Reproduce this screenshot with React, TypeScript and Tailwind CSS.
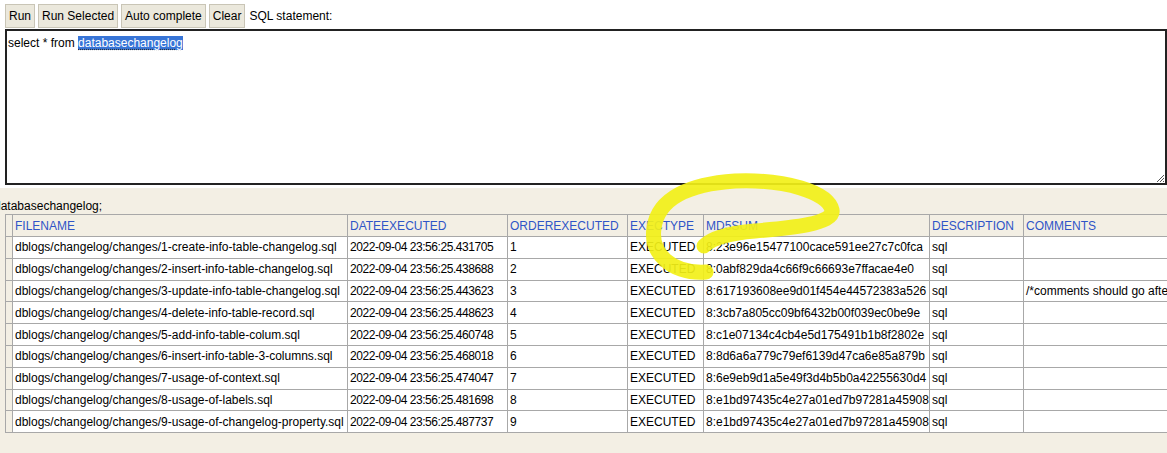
import React from "react";

const ROWS = [
  ["dblogs/changelog/changes/1-create-info-table-changelog.sql", "2022-09-04 23:56:25.431705", "1", "EXECUTED", "8:23e96e15477100cace591ee27c7c0fca", "sql", ""],
  ["dblogs/changelog/changes/2-insert-info-table-changelog.sql", "2022-09-04 23:56:25.438688", "2", "EXECUTED", "8:0abf829da4c66f9c66693e7ffacae4e0", "sql", ""],
  ["dblogs/changelog/changes/3-update-info-table-changelog.sql", "2022-09-04 23:56:25.443623", "3", "EXECUTED", "8:617193608ee9d01f454e44572383a526", "sql", "/*comments should go afte"],
  ["dblogs/changelog/changes/4-delete-info-table-record.sql", "2022-09-04 23:56:25.448623", "4", "EXECUTED", "8:3cb7a805cc09bf6432b00f039ec0be9e", "sql", ""],
  ["dblogs/changelog/changes/5-add-info-table-colum.sql", "2022-09-04 23:56:25.460748", "5", "EXECUTED", "8:c1e07134c4cb4e5d175491b1b8f2802e", "sql", ""],
  ["dblogs/changelog/changes/6-insert-info-table-3-columns.sql", "2022-09-04 23:56:25.468018", "6", "EXECUTED", "8:8d6a6a779c79ef6139d47ca6e85a879b", "sql", ""],
  ["dblogs/changelog/changes/7-usage-of-context.sql", "2022-09-04 23:56:25.474047", "7", "EXECUTED", "8:6e9eb9d1a5e49f3d4b5b0a42255630d4", "sql", ""],
  ["dblogs/changelog/changes/8-usage-of-labels.sql", "2022-09-04 23:56:25.481698", "8", "EXECUTED", "8:e1bd97435c4e27a01ed7b97281a45908", "sql", ""],
  ["dblogs/changelog/changes/9-usage-of-changelog-property.sql", "2022-09-04 23:56:25.487737", "9", "EXECUTED", "8:e1bd97435c4e27a01ed7b97281a45908", "sql", ""],
];

const COLS = ["FILENAME", "DATEEXECUTED", "ORDEREXECUTED", "EXECTYPE", "MD5SUM", "DESCRIPTION", "COMMENTS"];

function Btn({ label }: { label: string }) {
  return (
    <button className="h-[24px] px-[3px] bg-[#ebe8dc] border border-[#c9c5b6] text-[12px] text-black leading-none">
      {label}
    </button>
  );
}

export default function App() {
  return (
    <div className="relative w-[1167px] h-[453px] overflow-hidden bg-white font-['Liberation_Sans',Arial,sans-serif] text-[12px] text-black">
      {/* toolbar + editor */}
      <div className="pt-[4px] pl-[5px]">
        <div className="flex items-center gap-[3px] h-[24px]">
          <Btn label="Run" />
          <Btn label="Run Selected" />
          <Btn label="Auto complete" />
          <Btn label="Clear" />
          <span className="ml-[1px]">SQL statement:</span>
        </div>
        <div className="relative mt-[1px] h-[156px] w-[1162px] border-2 border-[#222] bg-white px-[1px] pt-[3px]">
          <span>select * from </span>
          <span className="bg-[#3875d7] text-white underline decoration-dotted decoration-[#333] underline-offset-2">
            databasechangelog
          </span>
          <svg className="absolute right-0 bottom-0" width="10" height="10" viewBox="0 0 10 10">
            <path d="M9 2 L2 9 M9 5 L5 9 M9 8 L8 9" stroke="#555" strokeWidth="1" />
          </svg>
        </div>
      </div>

      {/* results */}
      <div className="mt-[3px] h-[300px] bg-[#f3efe4]">
        <div className="h-[26px] pt-[11px] -ml-[6px] leading-[14px]">databasechangelog;</div>
        <table className="ml-[5px] border-collapse table-fixed w-[1318px]">
          <colgroup>
            <col className="w-[7px]" />
            <col className="w-[335px]" />
            <col className="w-[160px]" />
            <col className="w-[120px]" />
            <col className="w-[76px]" />
            <col className="w-[226px]" />
            <col className="w-[94px]" />
            <col className="w-[300px]" />
          </colgroup>
          <thead>
            <tr className="h-[22px]">
              <th className="border border-[#a8a8a8] p-0" />
              {COLS.map((c) => (
                <th
                  key={c}
                  className="border border-[#a8a8a8] px-[2px] text-left font-normal text-[#2f55c7] whitespace-nowrap"
                >
                  {c}
                </th>
              ))}
            </tr>
          </thead>
          <tbody>
            {ROWS.map((r, i) => (
              <tr key={i} className="h-[21.8px] bg-white">
                <td className="border border-[#a8a8a8] bg-[#f3efe4] p-0" />
                {r.map((v, j) => (
                  <td
                    key={j}
                    className={`border border-[#a8a8a8] px-[2px] whitespace-nowrap overflow-hidden ${
                      j === 1 ? "tracking-[-0.45px]" : ""
                    }`}
                  >
                    {v}
                  </td>
                ))}
              </tr>
            ))}
          </tbody>
        </table>
      </div>

      {/* yellow marker scribble */}
      <svg className="absolute left-0 top-0 pointer-events-none" width="1167" height="453">
        <path
          d="M706 272 C672 274 650 254 654 228 C658 198 690 184 735 181 C785 179 828 192 832 210 C835 224 790 228 755 231 C730 233 712 238 704 246"
          fill="none"
          stroke="#f2f018"
          strokeWidth="15"
          strokeLinecap="round"
          strokeLinejoin="round"
          opacity="0.92"
        />
      </svg>
    </div>
  );
}
